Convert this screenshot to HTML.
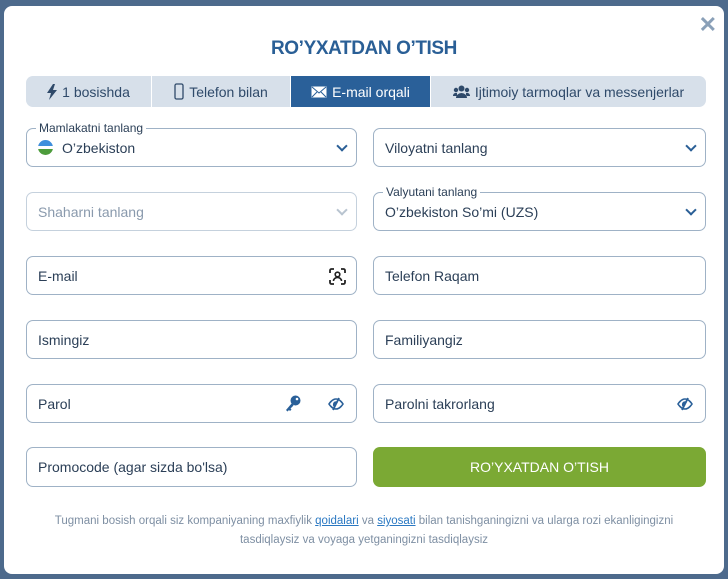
<!DOCTYPE html>
<html><head><meta charset="utf-8"><style>
*{box-sizing:border-box;margin:0;padding:0}
body{width:728px;height:579px;background:#4d6a8c;font-family:"Liberation Sans",sans-serif;position:relative;overflow:hidden;color:#2b3f57}
.modal{position:absolute;left:4px;top:6px;width:720px;height:568px;background:#fff;border-radius:8px}
.title{position:absolute;left:0;right:0;top:32px;text-align:center;color:#2a5f96;font-weight:bold;font-size:19px;letter-spacing:-0.4px}
.close{position:absolute;right:7px;top:6px;font-size:22px;color:#8aa0b8;font-weight:bold}
.tabs{position:absolute;left:22px;top:70px;width:680px;height:31px;background:#d7e0ea;border-radius:7px;display:flex;overflow:hidden}
.tab{display:flex;align-items:center;justify-content:center;font-size:14px;color:#2f4a6a;border-right:1px solid #fff}
.tab svg{margin-right:5px}
.tab.act{background:#2a6099;color:#fff}
.f{position:absolute;height:39px;border:1px solid #9fb2c6;border-radius:7px;font-size:14px;display:flex;align-items:center;padding-left:11px;color:#2b3f57}
.L{left:22px;width:331px}.R{left:369px;width:333px}
.lab{position:absolute;top:-8px;left:9px;background:#fff;font-size:12px;padding:0 3px;color:#2b3f57}
.chev{position:absolute;right:10px;top:13px;width:8px;height:8px;border-right:2px solid #2a5f96;border-bottom:2px solid #2a5f96;transform:rotate(45deg)}
.ic{position:absolute;top:11px}
.btn{position:absolute;left:369px;top:441px;width:333px;height:40px;background:#7ba934;border-radius:7px;color:#fff;font-size:14px;display:flex;align-items:center;justify-content:center}
.note{position:absolute;left:20px;right:20px;top:506px;text-align:center;font-size:11.5px;line-height:19px;color:#7e8fa3}
.note u{color:#2a78c2}
</style></head><body>
<div class="modal">
<div class="close">✕</div>
<div class="title">RO’YXATDAN O’TISH</div>
<div class="tabs">
<div class="tab" style="width:126px"><svg width="10" height="16" viewBox="0 0 10 16"><path d="M6 0L0 9h4l-2 7 8-10H6l2-6z" fill="#2f4a6a"/></svg>1 bosishda</div>
<div class="tab" style="width:139px"><svg width="10" height="17" viewBox="0 0 10 17"><rect x="1" y="1" width="8" height="15" rx="1.5" fill="none" stroke="#2f4a6a" stroke-width="1.3"/></svg>Telefon bilan</div>
<div class="tab act" style="width:140px"><svg width="16" height="12" viewBox="0 0 16 12"><rect x="0.5" y="0.5" width="15" height="11" fill="#fff"/><path d="M1 1l7 6 7-6M1 11l5-5M15 11l-5-5" stroke="#2a6099" fill="none"/></svg>E-mail orqali</div>
<div class="tab" style="width:275px;border:none"><svg width="17" height="13" viewBox="0 0 17 13"><circle cx="8.5" cy="3.5" r="3" fill="#2f4a6a"/><circle cx="3" cy="5" r="2.2" fill="#2f4a6a"/><circle cx="14" cy="5" r="2.2" fill="#2f4a6a"/><path d="M3 13a5.5 5 0 0 1 11 0z M0 11a3 3 0 0 1 4-3v3z M17 11a3 3 0 0 0-4-3v3z" fill="#2f4a6a"/></svg>Ijtimoiy tarmoqlar va messenjerlar</div>
</div>
<div class="f L" style="top:122px"><span class="lab">Mamlakatni tanlang</span><span style="display:inline-block;width:15px;height:15px;border-radius:50%;background:linear-gradient(#3f8fdc 40%,#fff 40%,#fff 60%,#4d9c3c 60%);margin-right:9px"></span>O’zbekiston<span class="chev"></span></div>
<div class="f R" style="top:122px">Viloyatni tanlang<span class="chev"></span></div>
<div class="f L" style="top:186px;color:#8a9aad;border-color:#c5d1dd">Shaharni tanlang<span class="chev" style="border-color:#b8c4d0"></span></div>
<div class="f R" style="top:186px"><span class="lab">Valyutani tanlang</span>O’zbekiston So’mi (UZS)<span class="chev"></span></div>
<div class="f L" style="top:250px">E-mail<svg class="ic" style="right:10px" width="17" height="17" viewBox="0 0 17 17"><path d="M1 5V2.5A1.5 1.5 0 0 1 2.5 1H5M12 1h2.5A1.5 1.5 0 0 1 16 2.5V5M16 12v2.5a1.5 1.5 0 0 1-1.5 1.5H12M5 16H2.5A1.5 1.5 0 0 1 1 14.5V12" stroke="#222" stroke-width="1.8" fill="none"/><circle cx="8.5" cy="6.5" r="2.3" stroke="#222" stroke-width="1.6" fill="none"/><path d="M4.5 13a4 3.5 0 0 1 8 0" stroke="#222" stroke-width="1.6" fill="none"/></svg></div>
<div class="f R" style="top:250px">Telefon Raqam</div>
<div class="f L" style="top:314px">Ismingiz</div>
<div class="f R" style="top:314px">Familiyangiz</div>
<div class="f L" style="top:378px">Parol<svg class="ic" style="right:55px;top:10px" width="16" height="17" viewBox="0 0 16 17"><circle cx="10.5" cy="5.5" r="5" fill="#2a6099"/><circle cx="12" cy="4" r="1.3" fill="#fff"/><path d="M7 8L1 15l1.5 1.5 1.5-1.5 1 1 1.5-1.5-1-1 3-3z" fill="#2a6099"/></svg><svg class="ic" style="right:12px;top:12px" width="16" height="14" viewBox="0 0 16 14"><path d="M1 7s3-5 7-5 7 5 7 5-3 5-7 5-7-5-7-5z" stroke="#2a6099" stroke-width="1.6" fill="none"/><path d="M5 7a3 3 0 0 1 5-2L6 10a3 3 0 0 1-1-3z" fill="#2a6099"/><path d="M11 1L5 13" stroke="#2a6099" stroke-width="1.8"/></svg></div>
<div class="f R" style="top:378px">Parolni takrorlang<svg class="ic" style="right:12px;top:12px" width="16" height="14" viewBox="0 0 16 14"><path d="M1 7s3-5 7-5 7 5 7 5-3 5-7 5-7-5-7-5z" stroke="#2a6099" stroke-width="1.6" fill="none"/><path d="M5 7a3 3 0 0 1 5-2L6 10a3 3 0 0 1-1-3z" fill="#2a6099"/><path d="M11 1L5 13" stroke="#2a6099" stroke-width="1.8"/></svg></div>
<div class="f L" style="top:441px;height:40px">Promocode (agar sizda bo'lsa)</div>
<div class="btn">RO’YXATDAN O’TISH</div>
<div class="note">Tugmani bosish orqali siz kompaniyaning maxfiylik <u>qoidalari</u> va <u>siyosati</u> bilan tanishganingizni va ularga rozi ekanligingizni<br>tasdiqlaysiz va voyaga yetganingizni tasdiqlaysiz</div>
</div>
</body></html>
